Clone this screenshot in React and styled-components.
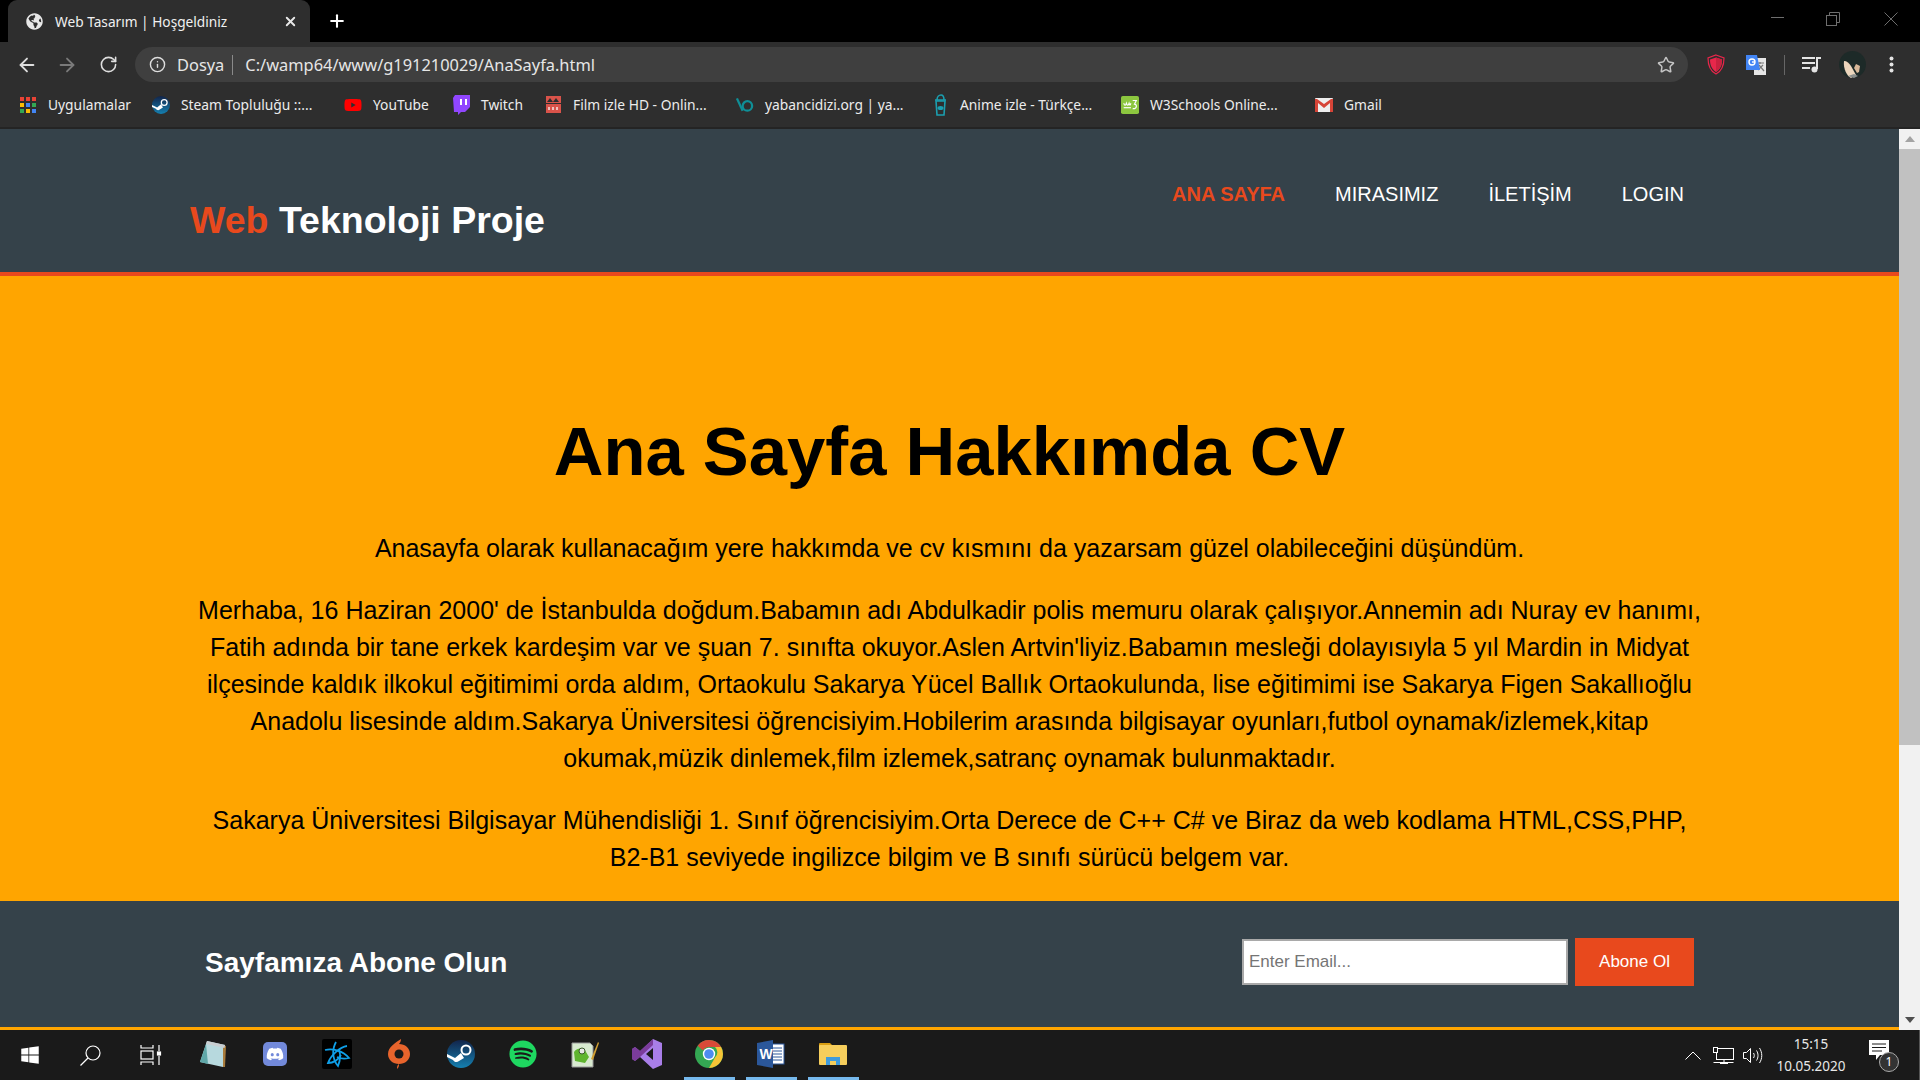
import React from "react";
import styled, { createGlobalStyle } from "styled-components";
import { ArrowLeft, ArrowRight, RotateCw, Info, Star, Plus, X } from "lucide-react";
import { FaDiscord, FaSpotify, FaYoutube, FaWindows, FaGlobeAmericas } from "react-icons/fa";

const GlobalStyle = createGlobalStyle`
  html, body {
    margin: 0;
    height: 100%;
    overflow: hidden;
    background: #000;
  }
  * { box-sizing: border-box; }
`;

const Screen = styled.div`
  width: 1920px;
  height: 1080px;
  display: flex;
  flex-direction: column;
  overflow: hidden;
`;

/* browser chrome */
const TabStrip = styled.div`
  height: 42px;
  background: #000;
  display: flex;
  align-items: flex-end;
  padding-left: 8px;
  font-family: "Noto Sans", sans-serif;
`;

const Tab = styled.div`
  width: 302px;
  height: 42px;
  background: #2e2e2e;
  border-radius: 9px 9px 0 0;
  display: flex;
  align-items: center;
  padding: 0 12px 0 18px;
  gap: 12px;
  color: #f0f0f0;
`;

const TabTitle = styled.span`
  flex: 1;
  font-size: 13.7px;
  white-space: nowrap;
`;

const NewTab = styled.div`
  width: 42px;
  height: 42px;
  margin-left: 6px;
  display: flex;
  align-items: center;
  justify-content: center;
  color: #fff;
`;

const WindowControls = styled.div`
  margin-left: auto;
  height: 42px;
  display: flex;
  align-items: flex-start;
  padding-top: 12px;
  padding-right: 22px;
  gap: 44px;
`;

const Toolbar = styled.div`
  height: 40px;
  background: #2e2e2e;
  display: flex;
  align-items: flex-start;
  padding: 5px 0 0 0;
`;

const NavIcons = styled.div`
  width: 135px;
  height: 35px;
  display: flex;
  align-items: center;
  padding-left: 16px;
  gap: 18px;
`;

const ReloadSlot = styled.div`
  display: flex;
  margin-left: 3px;
`;

const Omnibox = styled.div`
  flex: 1;
  height: 35px;
  background: #3f3f3f;
  border-radius: 18px;
  display: flex;
  align-items: center;
  padding: 0 13px 0 14px;
  font-family: "Noto Sans", sans-serif;
  font-size: 16.4px;
  color: #e6e6e6;
`;

const Scheme = styled.span`
  margin-left: 11px;
  padding-right: 8px;
  border-right: 1px solid #8a8a8a;
  line-height: 20px;
`;

const Url = styled.span`
  margin-left: 12px;
  flex: 1;
`;

const Extensions = styled.div`
  width: 232px;
  height: 35px;
  display: flex;
  align-items: center;
  padding-left: 15px;
`;

const ExtSlot = styled.div`
  width: ${(p) => p.$w}px;
  display: flex;
  justify-content: center;
  align-items: center;
`;

const ExtDivider = styled.div`
  width: 1px;
  height: 20px;
  background: #666;
  margin: 0 14px 0 1px;
`;

const Bookmarks = styled.div`
  height: 47px;
  background: #2e2e2e;
  border-bottom: 2px solid #242424;
  display: flex;
  align-items: center;
  padding: 0 0 0 19px;
  font-family: "Noto Sans", sans-serif;
  font-size: 13.8px;
  color: #ececec;
`;

const Bookmark = styled.div`
  width: ${(p) => p.$w}px;
  display: flex;
  align-items: center;
  gap: 11px;
  white-space: nowrap;
`;

const BookmarkIcon = styled.div`
  width: 18px;
  height: 18px;
  display: flex;
  align-items: center;
  justify-content: center;
  flex-shrink: 0;
`;

/* page area */
const Viewport = styled.div`
  height: 901px;
  display: flex;
  font-family: "Liberation Sans", Arial, sans-serif;
`;

const Page = styled.div`
  flex: 1;
  display: flex;
  flex-direction: column;
  min-width: 0;
`;

const Header = styled.header`
  height: 148px;
  background: #35424a;
  border-bottom: 4px solid #e8491d;
  display: flex;
  justify-content: space-between;
  padding: 0 190px;
`;

const Logo = styled.h1`
  margin: 69px 0 0;
  font-size: 37.5px;
  line-height: 44px;
  font-weight: 700;
  color: #fff;
`;

const Accent = styled.span`
  color: #e8491d;
`;

const Nav = styled.nav`
  display: flex;
  align-items: flex-start;
  padding-top: 54px;
`;

const NavLink = styled.a`
  padding: 0 25px;
  font-size: 20px;
  line-height: 23px;
  color: ${(p) => (p.$active ? "#e8491d" : "#fff")};
  font-weight: ${(p) => (p.$active ? 700 : 400)};
`;

const Showcase = styled.main`
  flex: 1;
  background: #ffa500;
  color: #000;
  text-align: center;
  padding: 130px 191px 0;
`;

const Heading = styled.h2`
  margin: 0 0 32px;
  font-size: 68.8px;
  line-height: 92px;
  font-weight: 700;
`;

const Paragraph = styled.p`
  margin: 0 0 25px;
  font-size: 25px;
  line-height: 37px;
`;

const Newsletter = styled.section`
  height: 129px;
  background: #35424a;
  border-bottom: 3px solid #ffa500;
  display: flex;
  justify-content: space-between;
  align-items: flex-start;
  padding: 37px 205px 0;
`;

const NewsletterTitle = styled.h3`
  margin: 9px 0 0;
  font-size: 28px;
  line-height: 32px;
  font-weight: 700;
  color: #fff;
`;

const Form = styled.form`
  display: flex;
  align-items: center;
  gap: 7px;
`;

const EmailInput = styled.input`
  width: 326px;
  height: 46px;
  border: 2px solid #a9a9a9;
  background: #fff;
  padding: 0 5px;
  font-family: "Liberation Sans", Arial, sans-serif;
  font-size: 17px;
  &::placeholder { color: #757575; opacity: 1; }
`;

const SubmitButton = styled.button`
  width: 119px;
  height: 48px;
  border: 0;
  background: #e8491d;
  color: #fff;
  font-family: "Liberation Sans", Arial, sans-serif;
  font-size: 17px;
`;

const Scrollbar = styled.div`
  width: 21px;
  background: #f1f1f1;
  display: flex;
  flex-direction: column;
  align-items: center;
`;

const ScrollArrow = styled.div`
  height: 20px;
  width: 100%;
  display: flex;
  align-items: center;
  justify-content: center;
`;

const ScrollTrack = styled.div`
  flex: 1;
  width: 100%;
`;

const ScrollThumb = styled.div`
  width: 100%;
  height: 596px;
  background: #c1c1c1;
`;

/* windows taskbar */
const Taskbar = styled.div`
  height: 50px;
  background: #1a1a1a;
  display: flex;
  align-items: center;
  color: #fff;
`;

const SystemSlot = styled.div`
  width: ${(p) => p.$w}px;
  height: 50px;
  display: flex;
  align-items: center;
  justify-content: center;
`;

const AppSlot = styled.div`
  width: 62px;
  height: 50px;
  display: flex;
  align-items: center;
  justify-content: center;
  position: relative;
  padding-bottom: 2px;
  &::after {
    content: "";
    display: ${(p) => (p.$open ? "block" : "none")};
    position: absolute;
    left: 6px;
    right: 5px;
    bottom: 0;
    height: 3px;
    background: #76b9ed;
  }
`;

const Tray = styled.div`
  margin-left: auto;
  height: 50px;
  display: flex;
  align-items: center;
  padding-right: 22px;
  border-right: 1px solid #555;
`;

const TrayIcon = styled.div`
  width: 30px;
  display: flex;
  justify-content: center;
  align-items: center;
`;

const Clock = styled.div`
  width: 80px;
  margin-left: 3px;
  text-align: center;
  font-family: "Noto Sans", sans-serif;
  font-size: 13.5px;
  line-height: 22px;
  color: #e8e8e8;
`;

const NotifyWrap = styled.div`
  width: 28px;
  height: 30px;
  margin-left: 18px;
  position: relative;
`;

const NotifyBadge = styled.span`
  position: absolute;
  right: -2px;
  bottom: -2px;
  width: 20px;
  height: 20px;
  border-radius: 50%;
  background: #333;
  border: 1px solid #aaa;
  font-family: "Noto Sans", sans-serif;
  font-size: 12px;
  line-height: 18px;
  text-align: center;
  color: #fff;
`;

const AppsGrid = () => {
  const colors = ["#e94335", "#e94335", "#e94335", "#fbbc05", "#4285f4", "#34a853", "#34a853", "#fbbc05", "#4285f4"];
  return (
    <svg width="16" height="16" viewBox="0 0 16 16">
      {colors.map((c, i) => (
        <rect key={i} x={(i % 3) * 6} y={Math.floor(i / 3) * 6} width="4" height="4" fill={c} />
      ))}
    </svg>
  );
};

const TwitchIcon = () => (
  <svg width="17" height="20" viewBox="0 0 17 20">
    <path d="M2 0h15v12l-5 5H8l-3 3v-3H1L0 3z" fill="#9146ff" />
    <path d="M7 4h2v6H7zM12 4h2v6h-2z" fill="#fff" />
  </svg>
);

const FilmIcon = () => (
  <svg width="17" height="19" viewBox="0 0 17 19">
    <path d="M1 1h15v17H1z" fill="#d9534a" />
    <path d="M2 7l3-4 3 4 3-4 3 4z" fill="#2e2e2e" />
    <path d="M1 8h15v1H1z" fill="#2e2e2e" />
    <path d="M3 12h2v3H3zM7 12h2v3H7zM11 12h2v3h-2z" fill="#f2c1bd" />
  </svg>
);

const YabanciIcon = () => (
  <svg width="19" height="16" viewBox="0 0 19 16">
    <path d="M1 1l6 13" stroke="#0f8f97" strokeWidth="2.4" fill="none" />
    <circle cx="12" cy="9" r="5" stroke="#0f8f97" strokeWidth="2.4" fill="none" />
  </svg>
);

const AnimeIcon = () => (
  <svg width="15" height="22" viewBox="0 0 15 22">
    <path d="M3 7h9l-1 14H4z" fill="none" stroke="#1b9fb0" strokeWidth="1.6" />
    <path d="M2 6h11M4 6c0-3 2-5 4-5s3 2 3 5" fill="none" stroke="#1b9fb0" strokeWidth="1.6" />
    <ellipse cx="7.5" cy="14" rx="3" ry="2" fill="#1b9fb0" />
  </svg>
);

const W3Icon = () => (
  <svg width="20" height="20" viewBox="0 0 20 20">
    <rect width="20" height="20" rx="2" fill="#8cc63f" />
    <path d="M3 8c1 3 2 3 3 0 1 3 2 3 3 0 1 3 1 3 2 0M13 5h4l-2 4c3 0 3 6-2 5" fill="none" stroke="#fff" strokeWidth="1.3" />
    <path d="M3 13h8" stroke="#fff" strokeWidth="1.3" />
  </svg>
);

const GmailIcon = () => (
  <svg width="18" height="14" viewBox="0 0 18 14">
    <rect width="18" height="14" rx="1" fill="#eee" />
    <path d="M0 1v13h3V5l6 5 6-5v9h3V1h-2L9 6 2 1z" fill="#d64437" />
  </svg>
);

const ShieldIcon = () => (
  <svg width="18" height="21" viewBox="0 0 18 21">
    <path d="M9 1l8 3c0 8-2 13-8 16C3 17 1 12 1 4z" fill="none" stroke="#e8274b" strokeWidth="1.2" />
    <path d="M9 3.5l6 2c0 6-2 10-6 12.500-4-2.500-6-6.500-6-12.500z" fill="#e8274b" />
    <path d="M9 3.500l6 2c0 6-2 10-6 12.500z" fill="#c9213f" />
  </svg>
);

const TranslateIcon = () => (
  <svg width="22" height="22" viewBox="0 0 22 22">
    <rect x="9" y="4" width="12" height="17" fill="#e6e6e6" />
    <path d="M12 9h7M15 8v2M13 16l5-5M14 11l5 6" stroke="#777" strokeWidth="1.2" fill="none" />
    <path d="M1 1h11l3 15H1z" fill="#4285f4" />
    <circle cx="7" cy="8" r="3" fill="none" stroke="#fff" strokeWidth="1.4" />
    <path d="M7 8h3" stroke="#fff" strokeWidth="1.4" />
  </svg>
);

const QueueIcon = () => (
  <svg width="20" height="17" viewBox="0 0 20 17" fill="#e4e4e4">
    <rect x="0" y="1" width="13" height="2" />
    <rect x="0" y="6" width="13" height="2" />
    <rect x="0" y="11" width="8" height="2" />
    <circle cx="12.500" cy="13.500" r="3" />
    <path d="M14 13V1h5v2h-3v10z" />
  </svg>
);

const Avatar = () => (
  <svg width="27" height="27" viewBox="0 0 27 27">
    <circle cx="13.500" cy="13.500" r="13.500" fill="#1d2a28" />
    <path d="M5 10c3 0 5 2 7 5l5 9-5 3c-4-2-8-9-7-17z" fill="#ecd6bd" />
    <path d="M17 13l4 2-1 6-2 1-3-5z" fill="#d8b899" />
    <path d="M9 25l6 2 4-2-4-2z" fill="#8b8f8e" />
  </svg>
);

const Dots = () => (
  <svg width="5" height="17" viewBox="0 0 5 17" fill="#e4e4e4">
    <circle cx="2.500" cy="2.500" r="2" />
    <circle cx="2.500" cy="8.500" r="2" />
    <circle cx="2.500" cy="14.500" r="2" />
  </svg>
);

const MinimizeIcon = () => (
  <svg width="12" height="14" viewBox="0 0 12 14" stroke="#6e6e6e" overflow="visible">
    <path d="M1 5.500h13" />
  </svg>
);

const RestoreIcon = () => (
  <svg width="14" height="14" viewBox="0 0 14 14" fill="none" stroke="#6e6e6e">
    <rect x="0.500" y="3.500" width="10" height="10" />
    <path d="M3.500 3.500v-3h10v10h-3" />
  </svg>
);

const CloseIcon = () => (
  <svg width="14" height="14" viewBox="0 0 14 14" stroke="#6e6e6e">
    <path d="M0.500 0.500l13 13M13.500 0.500l-13 13" />
  </svg>
);

const ArrowUpGlyph = () => (
  <svg width="10" height="6" viewBox="0 0 10 6"><path d="M5 0l5 6H0z" fill="#a3a3a3" /></svg>
);

const ArrowDownGlyph = () => (
  <svg width="10" height="6" viewBox="0 0 10 6"><path d="M0 0h10L5 6z" fill="#505050" /></svg>
);

const SearchIcon = () => (
  <svg width="21" height="21" viewBox="0 0 21 21" fill="none" stroke="#fff" strokeWidth="1.200">
    <circle cx="13" cy="8" r="7" />
    <path d="M8 13l-7.500 7.500" />
  </svg>
);

const TaskViewIcon = () => (
  <svg width="22" height="20" viewBox="0 0 22 20" fill="none" stroke="#fff" strokeWidth="1.200">
    <path d="M1 0v3h12V0M1 20v-3h12v3" />
    <rect x="1" y="6" width="12" height="8" />
    <path d="M19 0v6M19 11v9" />
    <rect x="17.500" y="7" width="3" height="3" fill="#fff" />
  </svg>
);

const NotepadIcon = () => (
  <svg width="28" height="28" viewBox="0 0 28 28">
    <path d="M8 1l18 4-2 22L1 22z" fill="#b7d9de" />
    <path d="M24 5l3 1-1 21h-2z" fill="#a87b3c" />
    <path d="M8 1l18 4-.500 3L7 4z" fill="#c9ced1" />
    <path d="M7 4L1 22l8 2z" fill="#5fa7a8" />
  </svg>
);

const BattleNetIcon = () => (
  <svg width="30" height="30" viewBox="0 0 30 30">
    <rect width="30" height="30" rx="2" fill="#000" />
    <g fill="none" stroke="#0f9fe8" strokeWidth="1.800">
      <path d="M3 11c8-2 18 1 24 8-4 1-8 1-12-1" />
      <path d="M14 3c-4 7-4 17 2 24 2-5 3-11 1-16" />
      <path d="M25 7C18 8 9 16 6 24c5 0 10-3 13-8" />
    </g>
  </svg>
);

const OriginIcon = () => (
  <svg width="22" height="30" viewBox="0 0 22 30">
    <path d="M13 0c0 2-1 4-2 5 6 0 11 4 11 10s-5 10-11 10c0 2 0 3-2 5 0-2 0-4 2-5C5 25 0 21 0 15 0 8 7 4 13 0z" fill="#e8642c" />
    <circle cx="11" cy="15" r="4.500" fill="#1a1a1a" />
  </svg>
);

const SteamBadge = ({ size }) => (
  <svg width={size} height={size} viewBox="0 0 28 28">
    <defs>
      <linearGradient id="steamGrad" x1="0" y1="0" x2="0" y2="1">
        <stop offset="0" stopColor="#12244a" />
        <stop offset="1" stopColor="#1580b0" />
      </linearGradient>
    </defs>
    <circle cx="14" cy="14" r="14" fill="url(#steamGrad)" />
    <circle cx="19" cy="10" r="4.500" fill="none" stroke="#fff" strokeWidth="2" />
    <path d="M0 14l8 4 6-5 3 5-5 3c-2 2-5 1-6-1L0 17z" fill="#fff" />
  </svg>
);

const NotepadPlusIcon = () => (
  <svg width="29" height="28" viewBox="0 0 29 28">
    <path d="M1 3h18l3 3v21H1z" fill="#d8ead0" stroke="#9a9a9a" />
    <path d="M3 12c4-5 10-4 12 0l3 5-4 6-10-2z" fill="#5fb52f" />
    <circle cx="11" cy="11" r="3" fill="#e8e8e8" stroke="#3a5a2a" />
    <path d="M20 19l7-17 1 1-6 17z" fill="#d2a032" />
  </svg>
);

const VisualStudioIcon = () => (
  <svg width="30" height="30" viewBox="0 0 30 30">
    <path d="M21 0l9 4v22l-9 4-13-12-5 4-3-2V10l3-2 5 4zM21 9l-7 6 7 6z" fill="#a97ee8" />
    <path d="M21 0L8 12 3 8l-3 2v10l3 2 5-4 13-12z" fill="#68217a" opacity="0.7" />
  </svg>
);

const ChromeIcon = () => (
  <svg width="28" height="28" viewBox="0 0 28 28">
    <circle cx="14" cy="14" r="14" fill="#34a853" />
    <path d="M14 0a14 14 0 0 1 12.100 7H14a7 7 0 0 0-6.100 3.500L2.700 5.700A14 14 0 0 1 14 0z" fill="#d94a38" />
    <path d="M26.100 7A14 14 0 0 1 14 28l6-10.500A7 7 0 0 0 20 7z" fill="#f6c436" />
    <circle cx="14" cy="14" r="6.200" fill="#fff" />
    <circle cx="14" cy="14" r="4.800" fill="#4e8cf0" />
  </svg>
);

const WordIcon = () => (
  <svg width="28" height="28" viewBox="0 0 28 28">
    <rect x="14" y="4" width="13" height="20" fill="#fff" stroke="#2b579a" />
    <path d="M16 8h9M16 11h9M16 14h9M16 17h9M16 20h9" stroke="#2b579a" />
    <path d="M0 3l16-3v28L0 25z" fill="#2b579a" />
    <text x="2.500" y="19" fontFamily="Liberation Sans, sans-serif" fontWeight="700" fontSize="14" fill="#fff">W</text>
  </svg>
);

const FolderIcon = () => (
  <svg width="28" height="24" viewBox="0 0 28 24">
    <path d="M0 2a1 1 0 0 1 1-1h10l3 3H0z" fill="#d99e12" />
    <rect y="3" width="28" height="20" rx="1" fill="#f6ce5c" />
    <path d="M7 23v-8h14v8h-4v-4h-6v4z" fill="#3f9bdc" />
  </svg>
);

const CaretIcon = () => (
  <svg width="16" height="9" viewBox="0 0 16 9" fill="none" stroke="#fff" strokeWidth="1">
    <path d="M0.500 8.500L8 1l7.500 7.500" />
  </svg>
);

const NetworkIcon = () => (
  <svg width="21" height="17" viewBox="0 0 21 17" fill="none" stroke="#fff" strokeWidth="1">
    <rect x="3.500" y="1.500" width="17" height="11" />
    <path d="M0.500 15.500h20M11 12.500v3M7 16.500h8" />
    <rect x="0.500" y="0.500" width="4" height="5" fill="#1a1a1a" />
  </svg>
);

const VolumeIcon = () => (
  <svg width="21" height="17" viewBox="0 0 21 17" fill="none" stroke="#fff" strokeWidth="1">
    <path d="M0.500 5.500h3l4-4v14l-4-4h-3z" />
    <path d="M10.500 6c1 1.500 1 3.500 0 5M13.500 3.500c2 3 2 7 0 10M16.500 1c3 4.500 3 10.500 0 15" />
  </svg>
);

const MessageIcon = () => (
  <svg width="21" height="21" viewBox="0 0 21 21">
    <path d="M0 0h20v15H11l-4 5v-5H0z" fill="#fff" />
    <path d="M3 4h14M3 7.500h14M3 11h10" stroke="#1a1a1a" strokeWidth="1" />
  </svg>
);

const TileDiscord = styled.div`
  width: 24px;
  height: 24px;
  background: #7289da;
  border-radius: 5px;
  display: flex;
  align-items: center;
  justify-content: center;
`;

const bookmarks = [
  { w: 133, icon: <AppsGrid />, label: "Uygulamalar" },
  { w: 192, icon: <SteamBadge size={18} />, label: "Steam Topluluğu ::..." },
  { w: 108, icon: <FaYoutube size={18} color="#f00" />, label: "YouTube" },
  { w: 92, icon: <TwitchIcon />, label: "Twitch" },
  { w: 192, icon: <FilmIcon />, label: "Film izle HD - Onlin..." },
  { w: 195, icon: <YabanciIcon />, label: "yabancidizi.org | ya..." },
  { w: 190, icon: <AnimeIcon />, label: "Anime izle - Türkçe..." },
  { w: 194, icon: <W3Icon />, label: "W3Schools Online..." },
  { w: 70, icon: <GmailIcon />, label: "Gmail" },
];

const apps = [
  { icon: <NotepadIcon /> },
  { icon: <TileDiscord><FaDiscord size={18} color="#fff" /></TileDiscord> },
  { icon: <BattleNetIcon /> },
  { icon: <OriginIcon /> },
  { icon: <SteamBadge size={28} /> },
  { icon: <FaSpotify size={28} color="#1ed760" /> },
  { icon: <NotepadPlusIcon /> },
  { icon: <VisualStudioIcon /> },
  { icon: <ChromeIcon />, open: true },
  { icon: <WordIcon />, open: true },
  { icon: <FolderIcon />, open: true },
];

export default function App() {
  return (
    <Screen>
      <GlobalStyle />
      <TabStrip>
        <Tab>
          <FaGlobeAmericas size={17} color="#e8e8e8" />
          <TabTitle>Web Tasarım | Hoşgeldiniz</TabTitle>
          <X size={15} color="#e8e8e8" strokeWidth={3} />
        </Tab>
        <NewTab>
          <Plus size={20} strokeWidth={2.5} />
        </NewTab>
        <WindowControls>
          <MinimizeIcon />
          <RestoreIcon />
          <CloseIcon />
        </WindowControls>
      </TabStrip>

      <Toolbar>
        <NavIcons>
          <ArrowLeft size={22} color="#dedede" strokeWidth={2} />
          <ArrowRight size={22} color="#7a7a7a" strokeWidth={2} />
          <ReloadSlot>
            <RotateCw size={19} color="#dedede" strokeWidth={2} />
          </ReloadSlot>
        </NavIcons>
        <Omnibox>
          <Info size={17} color="#dedede" strokeWidth={2} />
          <Scheme>Dosya</Scheme>
          <Url>C:/wamp64/www/g191210029/AnaSayfa.html</Url>
          <Star size={18} color="#c4c4c4" strokeWidth={2} />
        </Omnibox>
        <Extensions>
          <ExtSlot $w={26}><ShieldIcon /></ExtSlot>
          <ExtSlot $w={54}><TranslateIcon /></ExtSlot>
          <ExtDivider />
          <ExtSlot $w={26}><QueueIcon /></ExtSlot>
          <ExtSlot $w={54}><Avatar /></ExtSlot>
          <ExtSlot $w={24}><Dots /></ExtSlot>
        </Extensions>
      </Toolbar>

      <Bookmarks>
        {bookmarks.map((b) => (
          <Bookmark key={b.label} $w={b.w}>
            <BookmarkIcon>{b.icon}</BookmarkIcon>
            {b.label}
          </Bookmark>
        ))}
      </Bookmarks>

      <Viewport>
        <Page>
          <Header>
            <Logo><Accent>Web</Accent> Teknoloji Proje</Logo>
            <Nav>
              <NavLink $active>ANA SAYFA</NavLink>
              <NavLink>MIRASIMIZ</NavLink>
              <NavLink>İLETİŞİM</NavLink>
              <NavLink>LOGIN</NavLink>
            </Nav>
          </Header>
          <Showcase>
            <Heading>Ana Sayfa Hakkımda CV</Heading>
            <Paragraph>Anasayfa olarak kullanacağım yere hakkımda ve cv kısmını da yazarsam güzel olabileceğini düşündüm.</Paragraph>
            <Paragraph>Merhaba, 16 Haziran 2000' de İstanbulda doğdum.Babamın adı Abdulkadir polis memuru olarak çalışıyor.Annemin adı Nuray ev hanımı, Fatih adında bir tane erkek kardeşim var ve şuan 7. sınıfta okuyor.Aslen Artvin'liyiz.Babamın mesleği dolayısıyla 5 yıl Mardin in Midyat ilçesinde kaldık ilkokul eğitimimi orda aldım, Ortaokulu Sakarya Yücel Ballık Ortaokulunda, lise eğitimimi ise Sakarya Figen Sakallıoğlu Anadolu lisesinde aldım.Sakarya Üniversitesi öğrencisiyim.Hobilerim arasında bilgisayar oyunları,futbol oynamak/izlemek,kitap okumak,müzik dinlemek,film izlemek,satranç oynamak bulunmaktadır.</Paragraph>
            <Paragraph>Sakarya Üniversitesi Bilgisayar Mühendisliği 1. Sınıf öğrencisiyim.Orta Derece de C++ C# ve Biraz da web kodlama HTML,CSS,PHP, B2-B1 seviyede ingilizce bilgim ve B sınıfı sürücü belgem var.</Paragraph>
          </Showcase>
          <Newsletter>
            <NewsletterTitle>Sayfamıza Abone Olun</NewsletterTitle>
            <Form>
              <EmailInput placeholder="Enter Email..." />
              <SubmitButton type="button">Abone Ol</SubmitButton>
            </Form>
          </Newsletter>
        </Page>
        <Scrollbar>
          <ScrollArrow><ArrowUpGlyph /></ScrollArrow>
          <ScrollThumb />
          <ScrollTrack />
          <ScrollArrow><ArrowDownGlyph /></ScrollArrow>
        </Scrollbar>
      </Viewport>

      <Taskbar>
        <SystemSlot $w={60}><FaWindows size={20} /></SystemSlot>
        <SystemSlot $w={60}><SearchIcon /></SystemSlot>
        <SystemSlot $w={62}><TaskViewIcon /></SystemSlot>
        {apps.map((a, i) => (
          <AppSlot key={i} $open={a.open}>{a.icon}</AppSlot>
        ))}
        <Tray>
          <TrayIcon><CaretIcon /></TrayIcon>
          <TrayIcon><NetworkIcon /></TrayIcon>
          <TrayIcon><VolumeIcon /></TrayIcon>
          <Clock>15:15<br />10.05.2020</Clock>
          <NotifyWrap>
            <MessageIcon />
            <NotifyBadge>1</NotifyBadge>
          </NotifyWrap>
        </Tray>
      </Taskbar>
    </Screen>
  );
}
